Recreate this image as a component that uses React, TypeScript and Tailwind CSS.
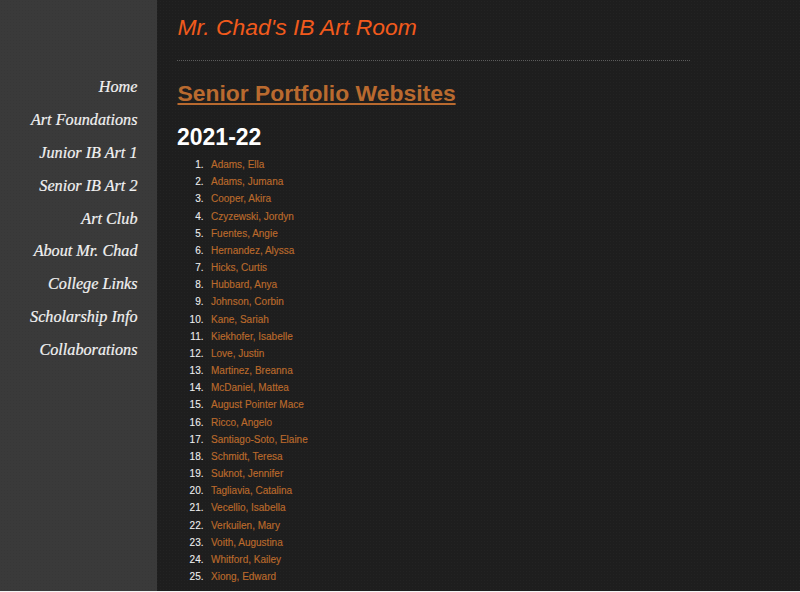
import React from 'react';

const navItems = [
  'Home',
  'Art Foundations',
  'Junior IB Art 1',
  'Senior IB Art 2',
  'Art Club',
  'About Mr. Chad',
  'College Links',
  'Scholarship Info',
  'Collaborations',
];

const students = [
  'Adams, Ella',
  'Adams, Jumana',
  'Cooper, Akira',
  'Czyzewski, Jordyn',
  'Fuentes, Angie',
  'Hernandez, Alyssa',
  'Hicks, Curtis',
  'Hubbard, Anya',
  'Johnson, Corbin',
  'Kane, Sariah',
  'Kiekhofer, Isabelle',
  'Love, Justin',
  'Martinez, Breanna',
  'McDaniel, Mattea',
  'August Pointer Mace',
  'Ricco, Angelo',
  'Santiago-Soto, Elaine',
  'Schmidt, Teresa',
  'Suknot, Jennifer',
  'Tagliavia, Catalina',
  'Vecellio, Isabella',
  'Verkuilen, Mary',
  'Voith, Augustina',
  'Whitford, Kailey',
  'Xiong, Edward',
];

const App: React.FC = () => {
  return (
    <div className="h-[592px] w-[800px] overflow-hidden bg-[#f4f4f4] font-['Liberation_Sans',sans-serif]">
      <div className="flex h-[591px] bg-[#1e1e1e] bg-[radial-gradient(circle,rgba(255,255,255,0.025)_0.8px,transparent_1px)] bg-[length:3px_3px]">
        <nav className="flex w-[157px] shrink-0 flex-col gap-[10.9px] bg-[#3a3a3a] bg-[radial-gradient(circle,rgba(0,0,0,0.06)_0.8px,transparent_1px)] bg-[length:3px_3px] pr-[19.5px] pt-[76px] text-right font-['Liberation_Serif',serif] text-[16.2px] italic leading-[22px] text-[#f2f2f2] [-webkit-text-stroke:0.2px]">
          {navItems.map((item) => (
            <a key={item} href="#" className="block">
              {item}
            </a>
          ))}
        </nav>

        <main className="w-[533px] pl-[20px] pt-[13px]">
          <div className="ml-[0.5px] text-[22.9px] italic leading-[28px] text-[#f15a1c]">Mr. Chad's IB Art Room</div>
          <hr className="mt-[19px] border-0 border-t border-dotted border-[#5c5c5c]" />
          <h1 className="ml-[0.5px] mt-[18px] text-[22.9px] font-bold leading-[28px] text-[#b96a2f] underline">
            Senior Portfolio Websites
          </h1>
          <h2 className="mt-[16px] text-[23px] font-bold leading-[28px] text-white">2021-22</h2>
          <ol className="mt-[5px] text-[10px] leading-[17.17px] text-[#eeeeee]">
            {students.map((name, i) => (
              <li key={name} className="flex gap-[7.5px]">
                <span className="w-[26.5px] text-right [-webkit-text-stroke:0.1px]">{i + 1}.</span>
                <a href="#" className="text-[#bb6a2c] [-webkit-text-stroke:0.15px]">
                  {name}
                </a>
              </li>
            ))}
          </ol>
        </main>
      </div>
    </div>
  );
};

export default App;
